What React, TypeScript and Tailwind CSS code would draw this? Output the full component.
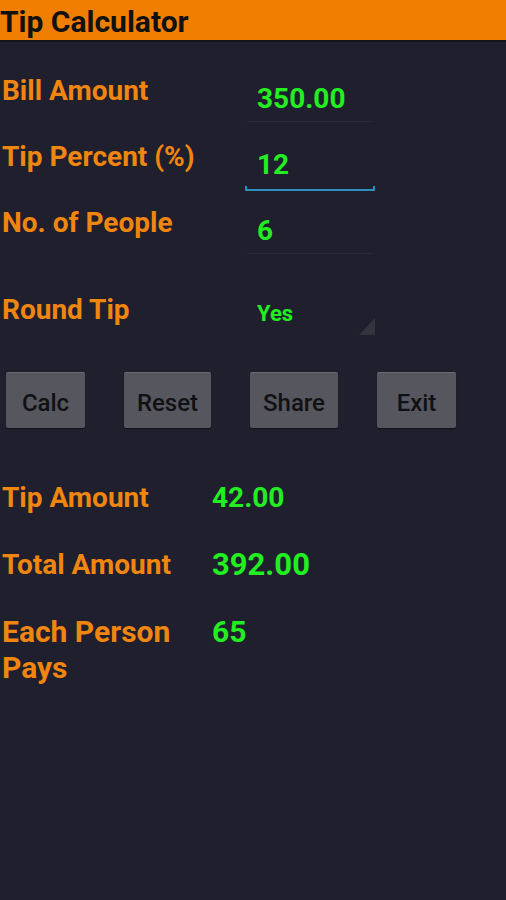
import React from "react";

const font = { fontFamily: "Roboto, 'Liberation Sans', sans-serif" };

interface FieldRowProps {
	label: string;
	value: string;
	focused?: boolean;
}

const FieldRow = ({ label, value, focused }: FieldRowProps) => (
	<div className="flex h-[66px]">
		<div className="w-[245px] pl-[2px] pt-[17px] text-[28px] leading-[34px] font-bold text-[#f0860f]">
			{label}
		</div>
		<div className="w-[130px] pt-[25px]">
			<div className="pl-[12px] h-[34px] text-[28px] leading-[34px] font-bold text-[#22ee22]">
				{value}
			</div>
			{focused ? (
				<div className="mt-[4px] h-[5px] border-b-2 border-x-2 border-[#2f8fc0] rounded-b-[1px]" />
			) : (
				<div className="mt-[5px] h-[1px] bg-[#2a2a38] mx-[2px]" />
			)}
		</div>
	</div>
);

const ResultRow = ({ label, value, size }: { label: string; value: string; size: "sm" | "lg" | "xl" }) => (
	<div className="flex min-h-[67px]">
		<div
			className={
				size === "xl"
					? "w-[212px] pl-[2px] text-[30px] leading-[36px] font-bold text-[#f0860f]"
					: "w-[212px] pl-[2px] text-[28px] leading-[36px] font-bold text-[#f0860f]"
			}
		>
			{label}
		</div>
		<div
			className={
				size === "lg"
					? "text-[31px] leading-[36px] font-bold text-[#22ee22]"
					: size === "xl"
						? "text-[30px] leading-[36px] font-bold text-[#22ee22]"
						: "text-[28px] leading-[36px] font-bold text-[#22ee22]"
			}
		>
			{value}
		</div>
	</div>
);

const Btn = ({ label, w }: { label: string; w: string }) => (
	<div
		className={`${w} h-[56px] pt-[4px] flex items-center justify-center bg-[#56565f] border-t border-[#6a6a72] rounded-[2px] text-[24px] font-medium text-[#111114] shadow-[0_1px_1px_rgba(0,0,0,0.5)]`}
	>
		{label}
	</div>
);

export default function App() {
	return (
		<div className="w-[506px] h-[900px] bg-[#1f1f2e] overflow-hidden" style={font}>
			<div className="h-[42px] bg-[#f07e00] border-b-2 border-[#14141c] flex items-center pt-[4px]">
				<span className="text-[30px] font-bold text-[#111] leading-none">Tip Calculator</span>
			</div>
			<div className="pt-[15px]">
				<FieldRow label="Bill Amount" value="350.00" />
				<FieldRow label="Tip Percent (%)" value="12" focused />
				<FieldRow label="No. of People" value="6" />
				<div className="flex h-[90px]">
					<div className="w-[245px] pl-[2px] pt-[38px] text-[28px] leading-[34px] font-bold text-[#f0860f]">
						Round Tip
					</div>
					<div className="w-[130px] pt-[45px] relative">
						<div className="pl-[12px] text-[22px] leading-[28px] font-bold text-[#22ee22]">Yes</div>
						<svg className="absolute right-0 top-[63px]" width="16" height="17" viewBox="0 0 16 17">
							<polygon points="16,0 16,17 0,17" fill="#34343f" />
						</svg>
					</div>
				</div>
				<div className="flex gap-[39px] pl-[6px] mt-[27px]">
					<Btn label="Calc" w="w-[79px]" />
					<Btn label="Reset" w="w-[87px]" />
					<Btn label="Share" w="w-[88px]" />
					<Btn label="Exit" w="w-[79px]" />
				</div>
				<div className="mt-[52px]">
					<ResultRow label="Tip Amount" value="42.00" size="sm" />
					<ResultRow label="Total Amount" value="392.00" size="lg" />
					<ResultRow label="Each Person Pays" value="65" size="xl" />
				</div>
			</div>
		</div>
	);
}
